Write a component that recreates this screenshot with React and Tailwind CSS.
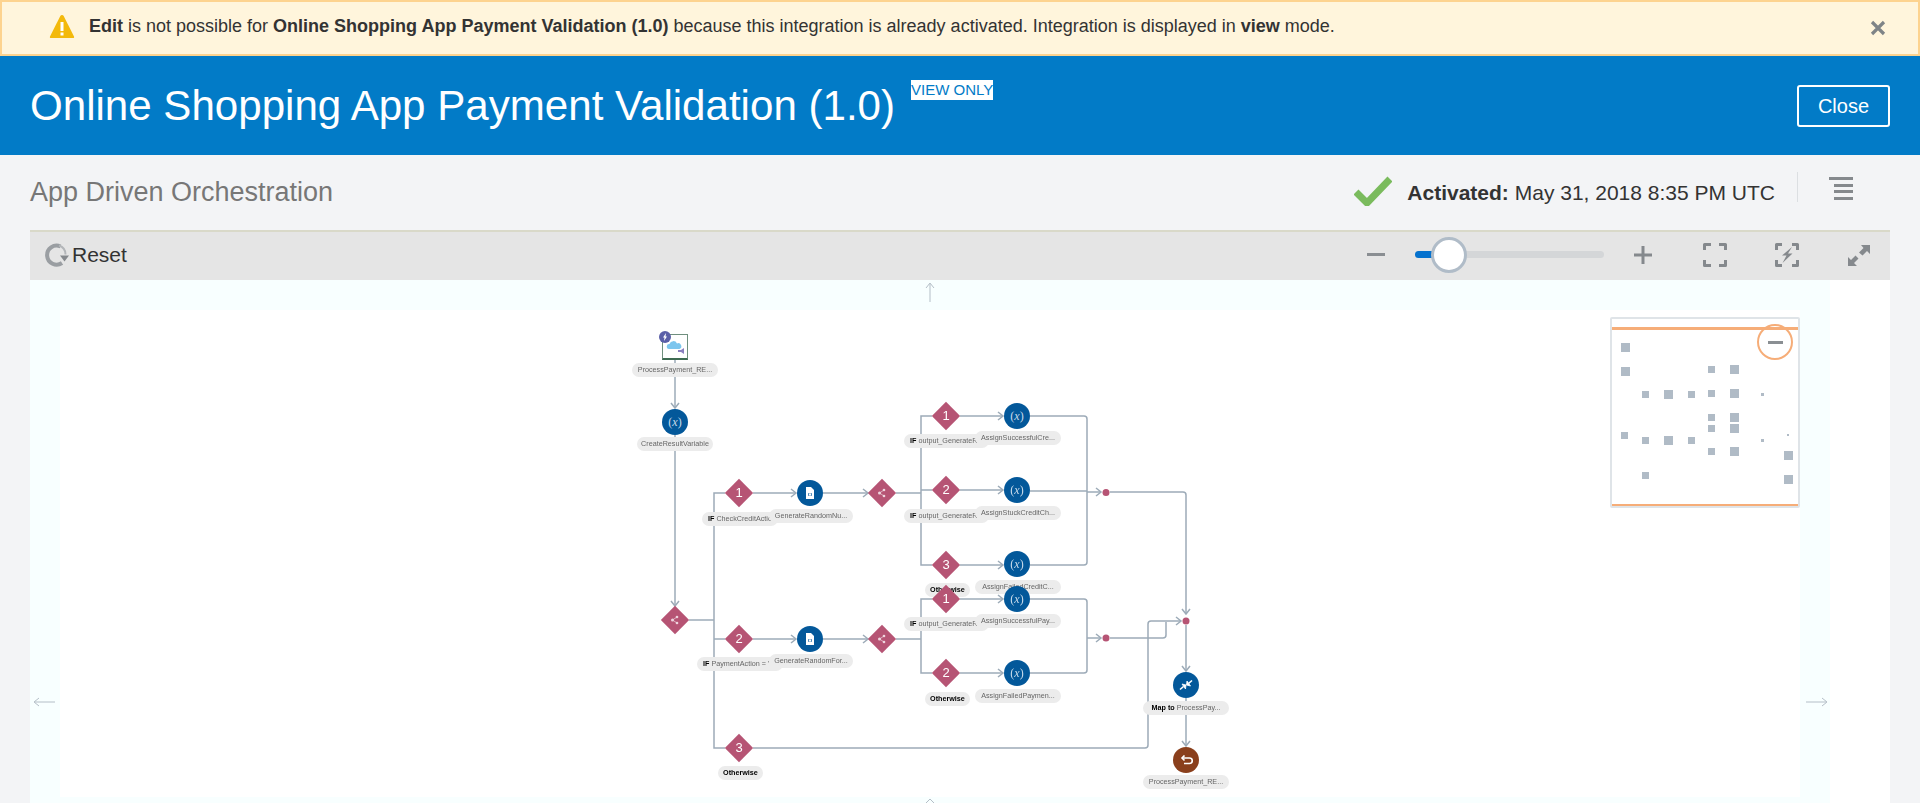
import React from "react";

const LINE = "#9dabb8";
const paths = [
  "M675 360V408", "M675 435V606", "M689 620H714", "M725 493H714V748H725", "M714 639H725",
  "M753 493H796", "M823 493H868", "M753 639H796", "M823 639H868",
  "M896 493H921", "M896 639H921", "M932 416H921V565H932", "M921 490H932",
  "M960 416H1003", "M960 490H1003", "M960 565H1003",
  "M1030 416H1084Q1087 416 1087 419V562Q1087 565 1084 565H1030", "M1030 491H1087", "M1087 492H1101",
  "M1110 492H1183Q1186 492 1186 495V614",
  "M932 599H921V673H932", "M960 599H1003", "M960 673H1003",
  "M1030 599H1084Q1087 599 1087 602V670Q1087 673 1084 673H1030", "M1087 638H1101",
  "M1110 638H1163Q1166 638 1166 635V622",
  "M753 748H1145Q1148 748 1148 745V624Q1148 621 1151 621H1181",
  "M1186 625V671", "M1186 698V746",
];
const arrows = [
  [675, 408, "d"], [675, 606, "d"], [796, 493, "r"], [868, 493, "r"], [796, 639, "r"], [868, 639, "r"],
  [1003, 416, "r"], [1003, 490, "r"], [1003, 565, "r"], [1003, 599, "r"], [1003, 673, "r"],
  [1101, 492, "r"], [1101, 638, "r"], [1186, 614, "d"], [1181, 621, "r"], [1186, 671, "d"], [1186, 746, "d"],
];
const diamonds = [
  [739, 493, "1"], [739, 639, "2"], [739, 748, "3"], [946, 416, "1"], [946, 490, "2"], [946, 565, "3"], [946, 599, "1"], [946, 673, "2"],
];
const shares = [[675, 620], [882, 493], [882, 639]];
const vars = [[675, 422], [1017, 416], [1017, 490], [1017, 564], [1017, 599], [1017, 673]];
const docs = [[810, 493], [810, 639]];
const labels = [
  [632, 363, 86, "ProcessPayment_RE..."],
  [637, 437, 76, "CreateResultVariable"],
  [702, 512, 76, "CheckCreditActio", "IF"],
  [769, 509, 84, "GenerateRandomNu..."],
  [904, 434, 85, "output_GenerateR", "IF"],
  [975, 431, 86, "AssignSuccessfulCre..."],
  [904, 509, 85, "output_GenerateR", "IF"],
  [975, 506, 86, "AssignStuckCreditCh..."],
  [925, 583, 45, "", "Otherwise"],
  [975, 580, 86, "AssignFailedCreditC..."],
  [904, 617, 85, "output_GenerateR", "IF"],
  [975, 614, 86, "AssignSuccessfulPay..."],
  [925, 692, 45, "", "Otherwise"],
  [975, 689, 86, "AssignFailedPaymen..."],
  [697, 657, 86, "PaymentAction = '", "IF"],
  [769, 654, 84, "GenerateRandomFor..."],
  [718, 766, 45, "", "Otherwise"],
  [1143, 701, 86, "ProcessPay...", "Map to"],
  [1143, 775, 86, "ProcessPayment_RE..."],
];
const miniBig = [[105,143],[105,214],[432,209],[234,283],[432,280],[432,351],[432,384],[234,422],[432,455],[594,467],[594,538]];
const miniSmall = [[365,209],[166,283],[303,283],[365,280],[365,351],[365,384],[104,405],[166,422],[303,422],[365,455],[166,526]];
const miniTiny = [[517,283],[517,422],[594,405]];

function Arrow({ x, y, dir }) {
  const pts = dir === "r"
    ? `M${x - 5} ${y - 4}L${x} ${y}L${x - 5} ${y + 4}`
    : `M${x - 4} ${y - 5}L${x} ${y}L${x + 4} ${y - 5}`;
  return <path d={pts} fill="none" stroke={LINE} strokeWidth="1.500" />;
}

function Label({ x, y, w, text, bold }) {
  const left = bold === "IF";
  return (
    <div
      className={`absolute h-[13.5px] rounded-full bg-[#ececec] text-[7.2px] leading-[13.5px] text-[#666666] whitespace-nowrap overflow-hidden ${left ? "text-left pl-[6px]" : "text-center"}`}
      style={{ left: x - 60, top: y - 280, width: w }}
    >
      {bold && <b className="text-black">{bold} </b>}
      {text}
    </div>
  );
}

function Circle({ x, y, color, children }) {
  return (
    <div
      className="absolute w-[26px] h-[26px] rounded-full flex items-center justify-center text-white"
      style={{ left: x - 73, top: y - 293, backgroundColor: color }}
    >
      {children}
    </div>
  );
}

function Diagram() {
  return (
    <div className="relative w-full h-full blur-[0.3px]">
      <svg className="absolute left-0 top-0" width="1740" height="523" viewBox="60 280 1740 523">
        {paths.map((d, i) => (
          <path key={i} d={d} fill="none" stroke={LINE} strokeWidth="1.500" />
        ))}
        {arrows.map(([x, y, dir], i) => (
          <Arrow key={i} x={x} y={y} dir={dir} />
        ))}
        <circle cx="1106" cy="492.5" r="3.5" fill="#b65474" />
        <circle cx="1106" cy="638" r="3.5" fill="#b65474" />
        <circle cx="1186" cy="621" r="3.5" fill="#b65474" />
      </svg>

      {labels.map(([x, y, w, t, b], i) => (
        <Label key={i} x={x} y={y} w={w} text={t} bold={b} />
      ))}

      <div className="absolute left-[602px] top-[54px] w-[26px] h-[26px] bg-white border border-[#6f8f7e] border-b-2 border-b-[#3e6b52]">
        <svg width="24" height="24" viewBox="0 0 24 24">
          <path d="M6 14a2.500 2.500 0 0 1 .5-5 4 4 0 0 1 7.500-.5 3 3 0 0 1 2.500 5.500z" fill="#7cc6ee" />
          <path d="M15 15h3l3-2v6l-3-2h-3z" fill="#8a7fbf" />
        </svg>
      </div>
      <div className="absolute left-[599px] top-[51px] w-[12px] h-[12px] rounded-full bg-[#5a5fa8] flex items-center justify-center">
        <svg width="8" height="8" viewBox="0 0 8 8"><path d="M5 0L2 4.500h1.500L3 8l3-4.500H4.500z" fill="#fff" /></svg>
      </div>

      {vars.map(([x, y], i) => (
        <Circle key={i} x={x} y={y} color="#03589a">
          <span className="text-[12px] text-[#c9dbea] font-['Liberation_Serif',serif]">(<i>x</i>)</span>
        </Circle>
      ))}
      {docs.map(([x, y], i) => (
        <Circle key={i} x={x} y={y} color="#03589a">
          <svg width="12" height="14" viewBox="0 0 12 14">
            <path d="M2 1h5l3 3v9H2z" fill="#fff" />
            <path d="M5 7q-1 1.500 0 3M7 7q1 1.500 0 3" stroke="#03589a" strokeWidth="0.900" fill="none" />
          </svg>
        </Circle>
      ))}
      <Circle x={1186} y={685} color="#03589a">
        <svg width="14" height="12" viewBox="0 0 14 12" fill="#fff" stroke="#fff" strokeWidth="0.800">
          <path d="M1 10.500L4.500 7.500" strokeWidth="1.600" />
          <path d="M3 5L7 6L6.500 10z" />
          <path d="M9.500 4.500L13 1.500" strokeWidth="1.600" />
          <path d="M7.500 6L8 2L11.500 7z" />
        </svg>
      </Circle>
      <Circle x={1186} y={760} color="#8a3f1c">
        <svg width="13" height="10" viewBox="0 0 13 10" fill="none" stroke="#fff" strokeWidth="1.600">
          <path d="M2 3h7.500a2.500 2.500 0 0 1 0 5.500H4" />
          <path d="M4.500 0.500L2 3l2.500 2.500" />
        </svg>
      </Circle>

      {diamonds.map(([x, y, n], i) => (
        <div key={i} className="absolute w-[28px] h-[28px] flex items-center justify-center" style={{ left: x - 74, top: y - 294 }}>
          <div className="absolute w-[20px] h-[20px] rotate-45 bg-[#b65474]" />
          <span className="relative text-white text-[13px] font-normal">{n}</span>
        </div>
      ))}
      {shares.map(([x, y], i) => (
        <div key={i} className="absolute w-[28px] h-[28px] flex items-center justify-center" style={{ left: x - 74, top: y - 294 }}>
          <div className="absolute w-[20px] h-[20px] rotate-45 bg-[#b65474]" />
          <svg className="relative" width="10" height="10" viewBox="0 0 10 10" fill="#eed5de">
            <circle cx="2.500" cy="5" r="1.500" />
            <circle cx="7" cy="2" r="1.300" />
            <circle cx="7" cy="8" r="1.300" />
            <path d="M2.500 5L7 2M2.500 5L7 8" stroke="#eed5de" strokeWidth="0.700" />
          </svg>
        </div>
      ))}
    </div>
  );
}

function Minimap() {
  const sq = (list, size) =>
    list.map(([X, Y], i) => (
      <div
        key={`${size}-${i}`}
        className="absolute bg-[#b0bbc6]"
        style={{ left: X / 3 + 1590 - 1612 - size / 2, top: Y / 3 + 300 - 319 - size / 2, width: size, height: size }}
      />
    ));
  return (
    <div className="absolute left-[1580px] top-[37px] w-[190px] h-[191px] bg-white border-2 border-[#dfe4e8] rounded-[2px]">
      <div className="absolute left-0 right-0 top-[8px] h-[3px] bg-[#f6ad78]" />
      <div className="absolute left-0 right-0 bottom-0 h-[2px] bg-[#f6ad78]" />
      {sq(miniBig, 9)}
      {sq(miniSmall, 7)}
      {sq(miniTiny, 2.5)}
      <div className="absolute left-[145px] top-[5px] w-[36px] h-[36px] rounded-full border-[2px] border-[#f6ad78] flex items-center justify-center">
        <div className="w-[15px] h-[3px] bg-[#8a8f93]" />
      </div>
    </div>
  );
}

export default function App() {
  return (
    <div className="w-[1920px] h-[803px] overflow-hidden flex flex-col bg-[#f3f4f6] font-['Liberation_Sans',Arial,sans-serif]">
      <div className="h-[56px] shrink-0 flex items-center bg-[#fff5dc] border-2 border-[#fdd38f] pl-[47px] pr-[32px] pb-[3px]">
        <svg className="shrink-0" width="26" height="25" viewBox="0 0 26 25">
          <path d="M13 1c.8 0 1.300.4 1.700 1.100L25 22.400c.4.900 0 1.600-1 1.600H2c-1 0-1.400-.7-1-1.600L11.300 2.100C11.700 1.400 12.200 1 13 1z" fill="#f3b90b" />
          <rect x="11.500" y="8" width="3" height="9" fill="#fff" />
          <rect x="11.500" y="18.500" width="3" height="3" fill="#fff" />
        </svg>
        <div className="ml-[14px] flex-1 text-[18px] text-[#333333] whitespace-nowrap">
          <b>Edit</b> is not possible for <b>Online Shopping App Payment Validation (1.0)</b> because this integration is already activated. Integration is displayed in <b>view</b> mode.
        </div>
        <svg className="shrink-0 mt-[3px]" width="16" height="16" viewBox="0 0 16 16">
          <path d="M2 2L14 14M14 2L2 14" stroke="#7f8487" strokeWidth="3.200" />
        </svg>
      </div>

      <div className="h-[99px] shrink-0 bg-[#027bc7] flex items-start pl-[30px] pr-[30px]">
        <h1 className="mt-[24px] text-[42.1px] leading-[52px] font-normal text-white whitespace-nowrap">Online Shopping App Payment Validation (1.0)</h1>
        <span className="ml-[16px] mt-[24px] h-[20px] bg-white text-[#027bc7] text-[15px] leading-[20px] whitespace-nowrap">VIEW ONLY</span>
        <button className="ml-auto mt-[29px] w-[93px] h-[42px] border-2 border-white rounded-[3px] text-white text-[20px]">Close</button>
      </div>

      <div className="h-[75px] shrink-0 flex items-center pl-[30px] pr-[67px]">
        <div className="text-[27px] text-[#777777] whitespace-nowrap">App Driven Orchestration</div>
        <svg className="ml-auto mb-[3px]" width="38" height="30" viewBox="0 0 38 30">
          <path d="M2 16L13 27L36 3" fill="none" stroke="#7abb5d" strokeWidth="7" />
        </svg>
        <div className="ml-[15px] text-[21px] text-[#333333] whitespace-nowrap"><b>Activated:</b> May 31, 2018 8:35 PM UTC</div>
        <div className="ml-[22px] w-px h-[30px] bg-[#dcdfe2] mb-[12px]" />
        <div className="ml-[31px] w-[24px] mb-[8px] flex flex-col items-end gap-[3.500px]">
          <div className="h-[3px] w-full bg-[#85898d]" />
          <div className="h-[3px] w-[19px] bg-[#85898d]" />
          <div className="h-[3px] w-[19px] bg-[#85898d]" />
          <div className="h-[3px] w-[19px] bg-[#85898d]" />
        </div>
      </div>

      <div className="flex-1 min-h-0 ml-[30px] mr-[30px] flex flex-col">
        <div className="h-[50px] shrink-0 bg-[#e5e5e5] border-t-2 border-[#d9d9c9] flex items-center pl-[15px] pr-[20px] pb-[3px]">
          <svg width="24" height="24" viewBox="0 0 24 24" fill="none">
            <path d="M15.500 3.500A9.500 9.500 0 1 0 17 20" stroke="#9a9ea2" strokeWidth="4" />
            <path d="M14 2.500a9.500 9.500 0 0 1 6.500 9" stroke="#b3b6b9" strokeWidth="2" />
            <path d="M15 12.500h9l-4.500 6z" fill="#85898d" />
          </svg>
          <span className="ml-[3px] text-[21px] text-[#333333]">Reset</span>
          <div className="ml-auto w-[18px] h-[3px] bg-[#8a8e92]" />
          <div className="relative ml-[30px] w-[189px] h-[7px] rounded-full bg-[#d4d6d8]">
            <div className="w-[20px] h-full rounded-l-full bg-[#0572ce]" />
            <div className="absolute left-[16px] top-[-14px] w-[36px] h-[36px] rounded-full bg-white border-[3px] border-[#b0bcc8]" />
          </div>
          <svg className="ml-[30px]" width="18" height="18" viewBox="0 0 18 18"><path d="M9 0V18M0 9H18" stroke="#85898d" strokeWidth="3" /></svg>
          <svg className="ml-[51px]" width="24" height="24" viewBox="0 0 24 24" fill="none" stroke="#85898d" strokeWidth="3" strokeLinejoin="round">
            <path d="M1.500 7V1.500H8M16 1.500H22.500V7M22.500 17V22.500H16M8 22.500H1.500V17" />
          </svg>
          <svg className="ml-[48px]" width="24" height="24" viewBox="0 0 24 24" fill="none" stroke="#85898d" strokeWidth="3" strokeLinejoin="round">
            <path d="M1.500 7V1.500H7M17 1.500H22.500V7M22.500 17V22.500H17M7 22.500H1.500V17" />
            <path d="M17 4L7 12.500H11.500L7.500 20L17.500 10.500H13z" fill="#85898d" stroke="none" />
          </svg>
          <svg className="ml-[49px]" width="22" height="24" viewBox="0 0 22 24" fill="#85898d">
            <path d="M13 2H22V11L19 8L14.500 12.500L11 9.500L15.500 5z" />
            <path d="M0 23V14L3 17L7.500 12.500L10.500 15.500L6 20L9 23z" />
          </svg>
        </div>

        <div className="relative flex-1 min-h-0 bg-white">
          <div className="absolute left-0 top-0 w-[1800px] h-[523px] bg-[#f8ffff] pl-[30px] pt-[30px] pr-[30px] pb-[6px]">
            <div className="w-full h-full bg-white" />
          </div>
          <div className="absolute left-0 top-0 w-[1800px] h-[523px] pl-[30px]">
            <Diagram />
          </div>
          <Minimap />
          <svg className="absolute left-0 top-0" width="1800" height="523" fill="none" stroke="#b4bec7" strokeWidth="1">
            <path d="M900 22V4M896 8L900 3L904 8" />
            <path d="M5 422H25M9 418L4 422L9 426" />
            <path d="M1776 422H1796M1792 418L1797 422L1792 426" />
            <path d="M896 523L900 519L904 523" />
          </svg>
        </div>
      </div>
    </div>
  );
}
